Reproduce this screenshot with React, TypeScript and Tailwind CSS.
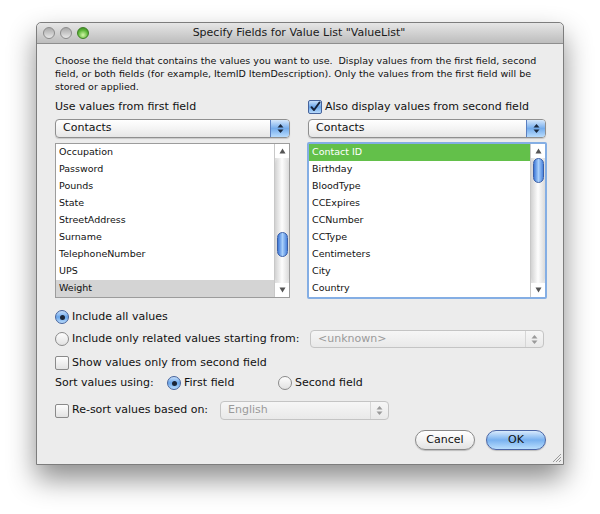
import React from 'react';

const font = { fontFamily: '"DejaVu Sans", "Liberation Sans", sans-serif' };

function Arrows({ disabled }: { disabled?: boolean }) {
  const c = disabled ? '#9a9a9a' : '#1a2a40';
  return (
    <svg width="7" height="11" viewBox="0 0 7 11">
      <path d="M3.5 1 L6.5 4.5 L0.5 4.5 Z" fill={c} />
      <path d="M3.5 10 L6.5 6.5 L0.5 6.5 Z" fill={c} />
    </svg>
  );
}

function Popup({ label, className, disabled }: { label: string; className: string; disabled?: boolean }) {
  return (
    <div
      className={`flex items-stretch rounded-[4px] border overflow-hidden ${
        disabled ? 'border-[#c4c4c4] bg-gradient-to-b from-[#f6f6f6] to-[#e9e9e9]' : 'border-[#8f8f8f] bg-gradient-to-b from-white via-[#f4f4f4] to-[#e6e6e6] shadow-[0_1px_1px_rgba(0,0,0,0.15)]'
      } ${className}`}
    >
      <div className={`flex-1 flex items-center pl-[7px] text-[11px] ${disabled ? 'text-[#9a9a9a]' : 'text-[#111]'}`}>{label}</div>
      {disabled ? (
        <div className="w-[18px] flex items-center justify-center border-l border-[#d6d6d6]">
          <Arrows disabled />
        </div>
      ) : (
        <div className="w-[19px] flex items-center justify-center border-l border-[#5a7fc0] bg-gradient-to-b from-[#d6e8fb] via-[#74acec] to-[#b8dcfd]">
          <Arrows />
        </div>
      )}
    </div>
  );
}

function Scrollbar({ thumbTop }: { thumbTop: number }) {
  return (
    <div className="w-[15px] flex flex-col border-l border-[#c8c8c8] bg-gradient-to-r from-[#dcdcdc] via-[#fafafa] to-[#e2e2e2]">
      <div className="h-[14px] flex items-center justify-center bg-white">
        <svg width="7" height="6" viewBox="0 0 7 6"><path d="M3.5 0.5 L6.5 5.5 L0.5 5.5 Z" fill="#555" /></svg>
      </div>
      <div className="flex-1 flex flex-col items-center rounded-t-[6px] rounded-b-[6px] bg-gradient-to-r from-[#d2d2d2] via-[#fdfdfd] to-[#dadada]">
        <div style={{ height: thumbTop }} />
        <div className="w-[11px] h-[25px] rounded-[6px] border border-[#3a5fa8] bg-gradient-to-r from-[#3f78d6] via-[#a9d0fb] to-[#4b83dc]" />
      </div>
      <div className="h-[14px] flex items-center justify-center bg-white">
        <svg width="7" height="6" viewBox="0 0 7 6"><path d="M3.5 5.5 L6.5 0.5 L0.5 0.5 Z" fill="#555" /></svg>
      </div>
    </div>
  );
}

function Radio({ on }: { on?: boolean }) {
  return on ? (
    <div className="w-[14px] h-[14px] rounded-full border border-[#46639c] bg-gradient-to-b from-[#c5defa] via-[#6aa6ea] to-[#b7dafb] flex items-center justify-center shrink-0">
      <div className="w-[5px] h-[5px] rounded-full bg-[#1b2536]" />
    </div>
  ) : (
    <div className="w-[14px] h-[14px] rounded-full border border-[#8a8a8a] bg-gradient-to-b from-[#fdfdfd] to-[#e2e2e2] shrink-0" />
  );
}

function Check({ on }: { on?: boolean }) {
  return on ? (
    <div className="w-[14px] h-[14px] rounded-[2px] border border-[#46639c] bg-gradient-to-b from-[#c5defa] via-[#6aa6ea] to-[#b7dafb] flex items-center justify-center shrink-0">
      <svg width="12" height="12" viewBox="0 0 12 12">
        <path d="M2.5 6.2 L5 9 L10.5 1.5" fill="none" stroke="#15213a" strokeWidth="2" strokeLinecap="round" strokeLinejoin="round" />
      </svg>
    </div>
  ) : (
    <div className="w-[14px] h-[14px] rounded-[2px] border border-[#8a8a8a] bg-gradient-to-b from-[#fdfdfd] to-[#e2e2e2] shrink-0" />
  );
}

const leftItems = ['Occupation', 'Password', 'Pounds', 'State', 'StreetAddress', 'Surname', 'TelephoneNumber', 'UPS', 'Weight'];
const rightItems = ['Contact ID', 'Birthday', 'BloodType', 'CCExpires', 'CCNumber', 'CCType', 'Centimeters', 'City', 'Country'];

export default function App() {
  return (
    <div className="w-[600px] h-[514px] bg-white pt-[22px] pl-[36px] text-[#111]" style={font}>
      <div className="relative w-[528px] h-[443px] flex flex-col bg-[#ececec] border border-[#7d7d7d] rounded-t-[5px] shadow-[0_14px_28px_rgba(0,0,0,0.45)]">
        {/* title bar */}
        <div className="relative h-[21px] flex items-center rounded-t-[5px] border-b border-[#8e8e8e] bg-gradient-to-b from-[#e6e6e6] to-[#bdbdbd]">
          <div className="flex items-center gap-[5px] pl-[6px]">
            <div className="w-[12px] h-[12px] rounded-full border border-[#8b8b8b] bg-gradient-to-b from-[#a9a9a9] to-[#e8e8e8]" />
            <div className="w-[12px] h-[12px] rounded-full border border-[#8b8b8b] bg-gradient-to-b from-[#a9a9a9] to-[#e8e8e8]" />
            <div className="w-[12px] h-[12px] rounded-full border border-[#3e7f24] bg-[radial-gradient(circle_at_50%_70%,#d4f7a8,#5fb83a_55%,#2f7a1a)]" />
          </div>
          <div className="flex-1 text-center text-[11px] text-[#1a1a1a] pr-[54px]">Specify Fields for Value List "ValueList"</div>
        </div>

        <div className="flex flex-col pl-[18px] pr-[16px]">
          <p className="mt-[10px] text-[9.5px] leading-[13px] text-[#111]">
            Choose the field that contains the values you want to use.&nbsp; Display values from the first field, second field, or both fields (for example, ItemID ItemDescription). Only the values from the first field will be stored or applied.
          </p>

          <div className="mt-[5px] h-[18px] flex items-center">
            <div className="w-[235px] text-[11px]">Use values from first field</div>
            <div className="ml-[18px] flex items-center gap-[3px] text-[11px]">
              <Check on />
              <span>Also display values from second field</span>
            </div>
          </div>

          <div className="mt-[3px] flex">
            <Popup label="Contacts" className="w-[235px] h-[19px]" />
            <Popup label="Contacts" className="ml-[18px] w-[238px] h-[19px]" />
          </div>

          <div className="mt-[4px] flex items-start">
            <div className="mt-[1px] w-[235px] h-[155px] flex border border-[#9c9c9c] bg-white">
              <div className="flex-1 flex flex-col">
                {leftItems.map((t) => (
                  <div key={t} className={`h-[17px] flex items-center pl-[3px] text-[9.5px] ${t === 'Weight' ? 'bg-[#d4d4d4]' : ''}`}>{t}</div>
                ))}
              </div>
              <Scrollbar thumbTop={74} />
            </div>
            <div className="ml-[17px] w-[240px] h-[157px] rounded-[2px] border-[2px] border-[#84aee4] flex bg-white">
              <div className="flex-1 flex flex-col">
                {rightItems.map((t, i) => (
                  <div key={t} className={`h-[17px] flex items-center pl-[3px] text-[9.5px] ${i === 0 ? 'bg-[#63c04a] text-white' : ''}`}>{t}</div>
                ))}
              </div>
              <Scrollbar thumbTop={0} />
            </div>
          </div>

          <div className="mt-[10px] h-[16px] flex items-center gap-[3px] text-[11px]">
            <Radio on />
            <span>Include all values</span>
          </div>

          <div className="mt-[5px] h-[18px] flex items-center text-[11px]">
            <div className="flex items-center gap-[3px] w-[255px]">
              <Radio />
              <span>Include only related values starting from:</span>
            </div>
            <Popup label="<unknown>" className="w-[234px] h-[18px]" disabled />
          </div>

          <div className="mt-[7px] h-[16px] flex items-center gap-[3px] text-[11px]">
            <Check />
            <span>Show values only from second field</span>
          </div>

          <div className="mt-[4px] h-[16px] flex items-center text-[11px]">
            <span className="w-[112px]">Sort values using:</span>
            <div className="w-[111px] flex items-center gap-[3px]">
              <Radio on />
              <span>First field</span>
            </div>
            <div className="flex items-center gap-[3px]">
              <Radio />
              <span>Second field</span>
            </div>
          </div>

          <div className="mt-[10px] h-[19px] flex items-center text-[11px]">
            <div className="w-[165px] flex items-center gap-[3px]">
              <Check />
              <span>Re-sort values based on:</span>
            </div>
            <Popup label="English" className="w-[169px] h-[19px]" disabled />
          </div>

          <div className="mt-[10px] flex justify-end gap-[11px] pr-[1px]">
            <div className="w-[60px] h-[20px] rounded-full border border-[#8a8a8a] bg-gradient-to-b from-white via-[#f3f3f3] to-[#e2e2e2] flex items-center justify-center text-[11px] shadow-[0_1px_1px_rgba(0,0,0,0.2)]">Cancel</div>
            <div className="w-[60px] h-[20px] rounded-full border border-[#4b66a6] bg-gradient-to-b from-[#d8eafc] via-[#78b1ef] to-[#b9defd] flex items-center justify-center text-[11px] shadow-[0_1px_1px_rgba(0,0,0,0.2)]">OK</div>
          </div>
        </div>

        <svg className="absolute right-[1px] bottom-[1px]" width="11" height="11" viewBox="0 0 11 11">
          <path d="M10 2 L2 10 M10 5 L5 10 M10 8 L8 10" stroke="#9a9a9a" strokeWidth="1" />
        </svg>
      </div>
    </div>
  );
}
